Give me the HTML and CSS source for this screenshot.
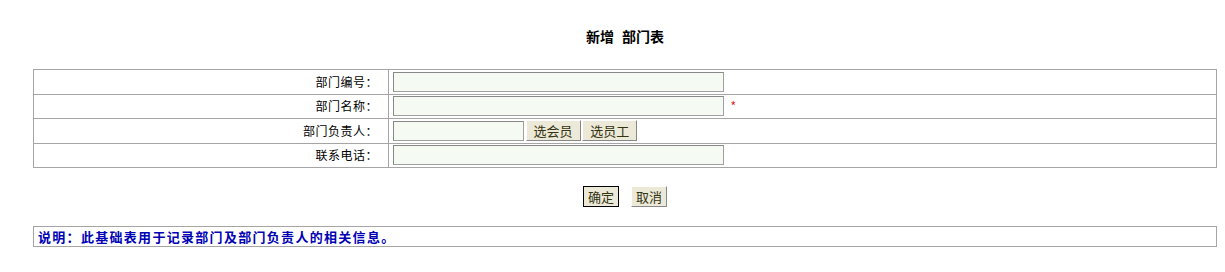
FILE: index.html
```html
<!DOCTYPE html>
<html lang="zh-CN">
<head>
    <meta charset="UTF-8">
    <title>新增 部门表</title>
    <link rel="stylesheet" href="styles.css">
</head>
<body>
    <div class="page">
        <h1 class="title">新增 部门表</h1>

        <table class="form-table">
            <tr>
                <td class="label">部门编号：</td>
                <td class="field"><input type="text" class="text-input"></td>
            </tr>
            <tr>
                <td class="label">部门名称：</td>
                <td class="field"><input type="text" class="text-input"> <span class="required">*</span></td>
            </tr>
            <tr>
                <td class="label">部门负责人：</td>
                <td class="field">
                    <input type="text" class="text-input short">
                    <button class="small-btn">选会员</button>
                    <button class="small-btn">选员工</button>
                </td>
            </tr>
            <tr>
                <td class="label">联系电话：</td>
                <td class="field"><input type="text" class="text-input"></td>
            </tr>
        </table>

        <div class="actions">
            <button class="small-btn default">确定</button>
            <button class="small-btn">取消</button>
        </div>

        <div class="note">说明：此基础表用于记录部门及部门负责人的相关信息。</div>
    </div>
</body>
</html>
```

FILE: styles.css
```css
body {
    margin: 0;
    background-color: #fff;
    font-family: "Noto Sans CJK SC", "Liberation Sans", sans-serif;
    font-size: 12px;
    color: #000;
}

.page {
    padding: 0 8px 0 33px;
}

.title {
    margin: 28px 0 25px;
    font-size: 14px;
    line-height: 16px;
    font-weight: bold;
    word-spacing: 5px;
    text-align: center;
}

.form-table {
    width: 100%;
    border-collapse: collapse;
    border: 1px solid #a5a5a5;
}

.form-table td {
    border: 1px solid #a5a5a5;
    height: 23.5px;
    padding: 0 4px;
    line-height: 14px;
}

.form-table .label {
    width: 30%;
    text-align: right;
    padding-right: 10px;
    letter-spacing: 0.5px;
}

.text-input {
    width: 331px;
    height: 20px;
    box-sizing: border-box;
    margin: 0;
    padding: 0 2px;
    border: 1px solid #a0a0a0;
    border-top-color: #888;
    border-left-color: #888;
    background-color: #f5fbf3;
    font-family: inherit;
    font-size: 12px;
    vertical-align: middle;
}

.text-input.short {
    width: 131px;
}

.required {
    color: #e02020;
    margin-left: 4px;
    vertical-align: middle;
}

.small-btn {
    height: 21px;
    padding: 0 7px;
    margin: 0 0 0 -1px;
    background-color: #ece9d8;
    border: 1px solid;
    border-color: #fff #888 #888 #fff;
    color: #333311;
    font-family: inherit;
    font-size: 13px;
    line-height: 17px;
    vertical-align: middle;
    cursor: pointer;
}

.actions {
    margin-top: 18px;
    text-align: center;
    font-size: 0;
}

.actions .small-btn {
    padding: 0 4px;
    margin: 0 6px;
}

.small-btn.default {
    outline: 1px solid #000;
    outline-offset: -1px;
}

.note {
    margin-top: 19px;
    border: 1px solid #a5a5a5;
    height: 19px;
    line-height: 19px;
    padding-left: 4px;
    color: #0000b4;
    font-size: 13px;
    font-weight: bold;
    letter-spacing: 1.3px;
}
```
